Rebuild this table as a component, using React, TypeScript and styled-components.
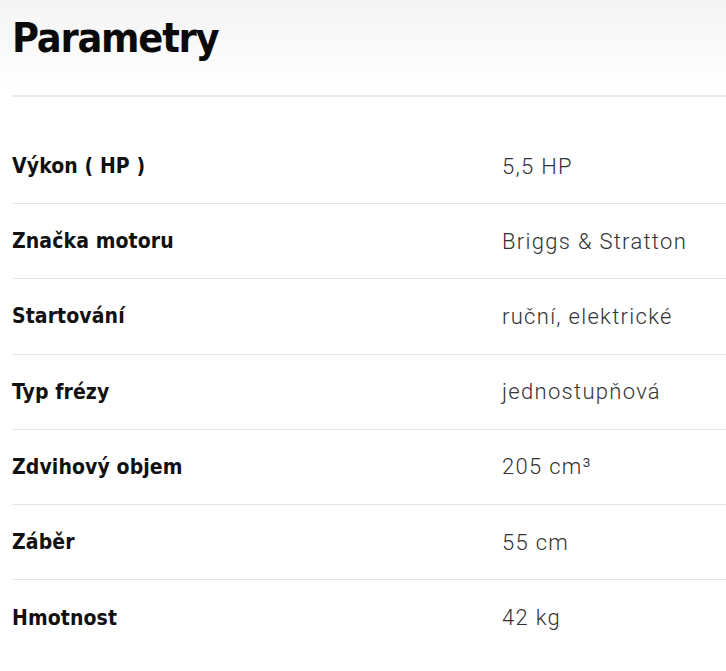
import React from "react";
import styled, { createGlobalStyle } from "styled-components";

const GlobalStyle = createGlobalStyle`
  html, body { margin: 0; padding: 0; background: #fff; }
  * { box-sizing: border-box; }
`;

const Page = styled.div`
  width: 726px;
  min-height: 671px;
  background: linear-gradient(to bottom, #f4f4f4 0px, #ffffff 95px, #ffffff 100%);
  padding: 0 0 0 12px;
`;

const Header = styled.div`
  height: 97px;
  border-bottom: 2px solid #e8e8e8;
  display: flex;
  align-items: flex-start;
  padding-top: 14px;
`;

const Title = styled.h2`
  margin: 0;
  font-family: "DejaVu Sans Condensed", "DejaVu Sans", sans-serif;
  font-weight: 700;
  font-size: 41px;
  letter-spacing: -1.2px;
  line-height: 1.2;
  color: #0a0a0a;
`;

const Table = styled.div`
  margin-top: 32px;
  display: flex;
  flex-direction: column;
`;

const Row = styled.div<{ $last?: boolean }>`
  display: grid;
  grid-template-columns: 490px 1fr;
  align-items: center;
  height: 75.2px;
  border-bottom: ${(p) => (p.$last ? "none" : "1px solid #e6e6e6")};
`;

const Label = styled.div`
  font-family: "DejaVu Sans Condensed", "DejaVu Sans", sans-serif;
  font-weight: 700;
  font-size: 21px;
  color: #111;
  letter-spacing: 0.1px;
`;

const Value = styled.div`
  font-family: Roboto, "Liberation Sans", sans-serif;
  font-weight: 300;
  font-size: 22px;
  color: #333;
  letter-spacing: 1.3px;
`;

const rows: [string, string][] = [
  ["Výkon ( HP )", "5,5 HP"],
  ["Značka motoru", "Briggs & Stratton"],
  ["Startování", "ruční, elektrické"],
  ["Typ frézy", "jednostupňová"],
  ["Zdvihový objem", "205 cm³"],
  ["Záběr", "55 cm"],
  ["Hmotnost", "42 kg"],
];

export default function App() {
  return (
    <>
      <GlobalStyle />
      <Page>
        <Header>
          <Title>Parametry</Title>
        </Header>
        <Table>
          {rows.map(([l, v], i) => (
            <Row key={l} $last={i === rows.length - 1}>
              <Label>{l}</Label>
              <Value>{v}</Value>
            </Row>
          ))}
        </Table>
      </Page>
    </>
  );
}
